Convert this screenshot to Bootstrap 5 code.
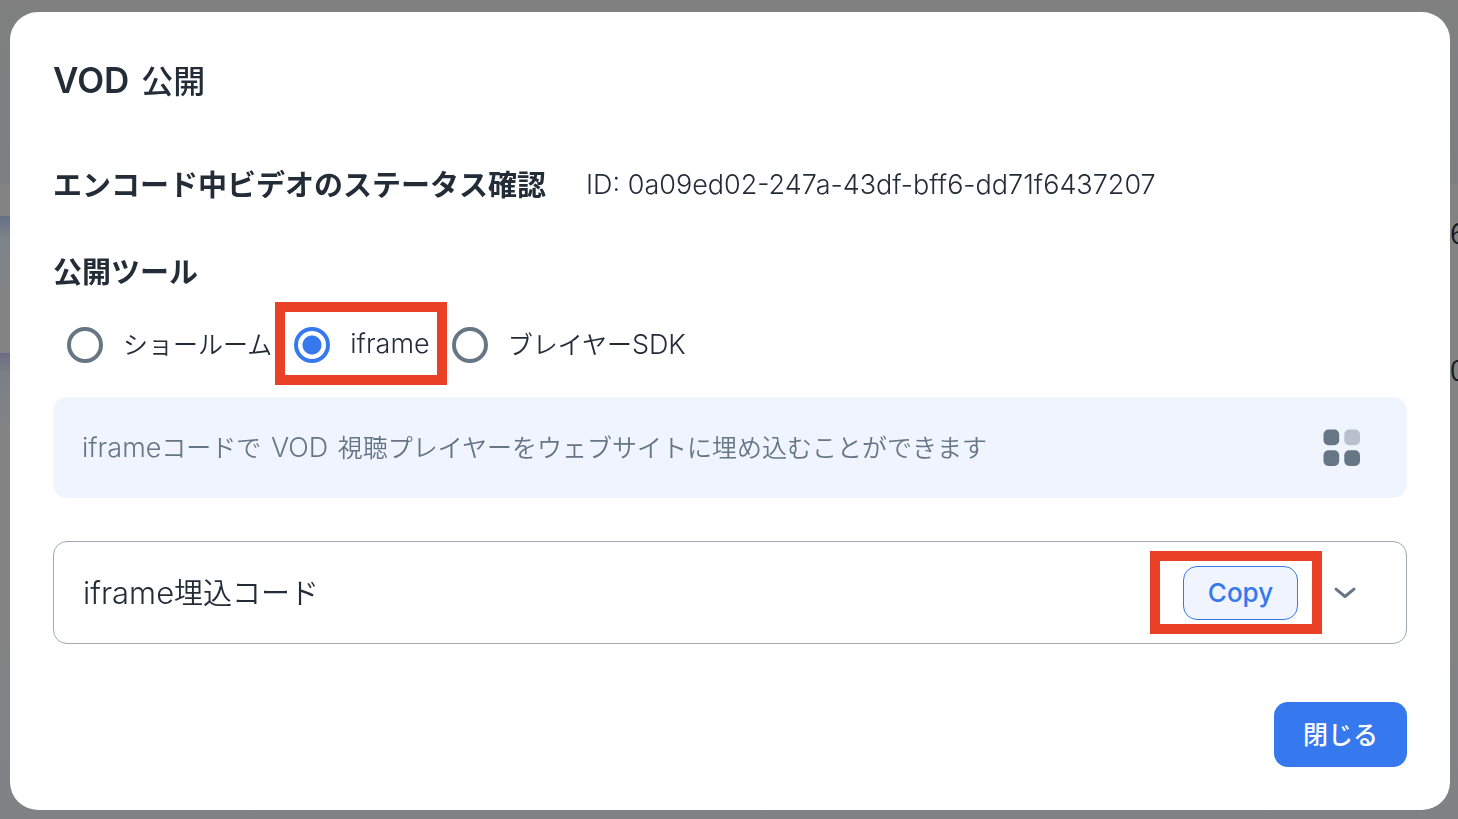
<!DOCTYPE html>
<html lang="ja">
<head>
<meta charset="utf-8">
<meta name="viewport" content="width=device-width, initial-scale=1">
<title>VOD 公開</title>
<link href="https://cdn.jsdelivr.net/npm/bootstrap@5.3.0/dist/css/bootstrap.min.css" rel="stylesheet">
<style>
  :root { --ink: #232d38; --slate: #667684; --brand: #3678ee; --tint: #eff4fe; --alert: #ea4026; }
  body { font-family: "Noto Sans CJK JP", sans-serif; color: var(--ink); background: #808080; line-height: 1.5; }
  .latin { font-family: Inter, "Noto Sans CJK JP", sans-serif; line-height: 1; }
  .page-behind { z-index: 0; padding-top: 184px; background: linear-gradient(#808080, #7c7f81 160px, #7c7f81 184px, #838383 184px, #838383 75%, #7f8285); font-size: 28px; }
  .video-row { height: 137px; padding-top: 32px; }
  .row-thumb { width: 10px; height: 74px; background: linear-gradient(#667089, #7d8489 24px, #808488); }
  .row-thumb-alt { background: linear-gradient(#6e6a86, #7b8086 20px, #808488); }
  .row-id { width: 8px; line-height: 32px; color: #15191e; font-weight: 350; }
  .dialog-wrap { padding: 12px 8px 9px 10px; z-index: 1; }
  .publish-dialog { border: 0; border-radius: 28px; padding: 43px 43px 43px; color: var(--ink); }
  .dialog-title { font-size: 32px; font-weight: 500; line-height: 48px; margin: 0; }
  .dialog-title .latin { font-size: 35px; font-weight: 600; margin-right: 3px; }
  .section-title { font-size: 29px; font-weight: 700; line-height: 44px; margin: 0; }
  .status-line { margin-top: 58px; gap: 40px; }
  .video-id { font-size: 27px; font-weight: 300; padding-top: 3px; }
  .tool-title { margin-top: 43px; }
  .tool-choices { margin-top: 30px; padding-left: 14px; gap: 22px; height: 45px; }
  .tool-option { gap: 20px; font-size: 25px; font-weight: 350; }
  .tool-option label { padding-bottom: 2px; }
  .tool-option .latin { font-size: 27px; font-weight: 300; }
  .tool-option .form-check-input { width: 36px; height: 36px; margin: 0; border: 4px solid var(--slate); float: none; flex: none; }
  .tool-option .form-check-input:checked { border-color: var(--brand); background: radial-gradient(circle, var(--brand) 9px, #fff 10px); }
  .callout-frame::after { content: ""; position: absolute; inset: var(--frame-inset); border: 10px solid var(--alert); pointer-events: none; }
  .tool-option.callout-frame { --frame-inset: -25px -17px -22px -19px; }
  .copy-holder { --frame-inset: -15px -24px -14px -33px; }
  .info-panel { margin-top: 30px; min-height: 101px; padding: 0 46px 0 29px; border-radius: 14px; background: var(--tint); color: var(--slate); font-size: 25px; font-weight: 350; }
  .info-panel .latin { font-size: 27px; font-weight: 300; }
  .info-panel .spaced { margin: 0 2px; }
  .code-panel { margin-top: 43px; min-height: 103px; padding: 0 49px 0 29px; border: 1px solid #a0a9b4; border-radius: 14px; font-size: 29px; font-weight: 350; }
  .code-panel .latin { font-size: 31px; font-weight: 300; }
  .panel-text { padding-bottom: 2px; }
  .btn-copy { width: 115px; height: 54px; padding: 1px 0 0; border: 1px solid var(--brand); border-radius: 14px; background: var(--tint); color: var(--brand); font: 500 26px/1 Inter, sans-serif; }
  .btn-expand { margin-left: 35px; padding: 0; border: 0; line-height: 1; }
  .btn-close-dialog { width: 133px; height: 65px; margin-top: 58px; padding: 0 0 2px; border: 0; border-radius: 14px; background: var(--brand); color: #fff; font-size: 25px; font-weight: 500; }
</style>
</head>
<body>
<div class="page-behind position-fixed top-0 start-0 w-100 h-100 overflow-hidden">
  <div class="video-row d-flex justify-content-between"><div class="row-thumb"></div><div class="row-id">6</div></div>
  <div class="video-row d-flex justify-content-between"><div class="row-thumb row-thumb-alt"></div><div class="row-id">0</div></div>
</div>
<main class="dialog-wrap position-relative">
  <div class="modal-content publish-dialog bg-white" role="dialog" aria-labelledby="dialogTitle">
    <h1 class="dialog-title" id="dialogTitle"><span class="latin">VOD </span>公開</h1>
    <div class="status-line d-flex align-items-center">
      <h2 class="section-title">エンコード中ビデオのステータス確認</h2>
      <span class="video-id latin">ID: 0a09ed02-247a-43df-bff6-dd71f6437207</span>
    </div>
    <h2 class="section-title tool-title">公開ツール</h2>
    <div class="tool-choices d-flex align-items-center" role="radiogroup">
      <div class="tool-option d-flex align-items-center">
        <input class="form-check-input" type="radio" name="tool" id="toolShowroom"><label for="toolShowroom">ショールーム</label>
      </div>
      <div class="tool-option callout-frame position-relative d-flex align-items-center">
        <input class="form-check-input" type="radio" name="tool" id="toolIframe" checked><label class="latin" for="toolIframe">iframe</label>
      </div>
      <div class="tool-option d-flex align-items-center">
        <input class="form-check-input" type="radio" name="tool" id="toolSdk"><label for="toolSdk">ブレイヤー<span class="latin">SDK</span></label>
      </div>
    </div>
    <div class="info-panel d-flex align-items-center justify-content-between">
      <span class="panel-text"><span class="latin">iframe</span>コードで<span class="latin spaced"> VOD </span>視聴プレイヤーをウェブサイトに埋め込むことができます</span>
      <svg width="38" height="38" viewBox="0 0 38 38" fill="#667684" aria-hidden="true">
        <rect x="0.5" y="0.5" width="15.7" height="15.7" rx="5"/><rect x="21.3" y="0.5" width="15.7" height="15.7" rx="5" fill="#b8c0cc"/>
        <rect x="0.5" y="21.3" width="15.7" height="15.7" rx="5"/><rect x="21.3" y="21.3" width="15.7" height="15.7" rx="5"/>
      </svg>
    </div>
    <div class="code-panel d-flex align-items-center">
      <span class="panel-text me-auto"><span class="latin">iframe</span>埋込コード</span>
      <div class="copy-holder callout-frame position-relative d-flex"><button class="btn btn-copy" type="button">Copy</button></div>
      <button class="btn btn-expand" type="button" aria-label="開く">
        <svg width="24" height="24" viewBox="0 0 24 24" fill="none" stroke="#667684" stroke-width="3" stroke-linecap="round" stroke-linejoin="round"><path d="M3 8.2l9 7.3 9-7.3"/></svg>
      </button>
    </div>
    <button class="btn btn-close-dialog align-self-end" type="button">閉じる</button>
  </div>
</main>
<script src="https://cdn.jsdelivr.net/npm/bootstrap@5.3.0/dist/js/bootstrap.bundle.min.js"></script>
</body>
</html>
